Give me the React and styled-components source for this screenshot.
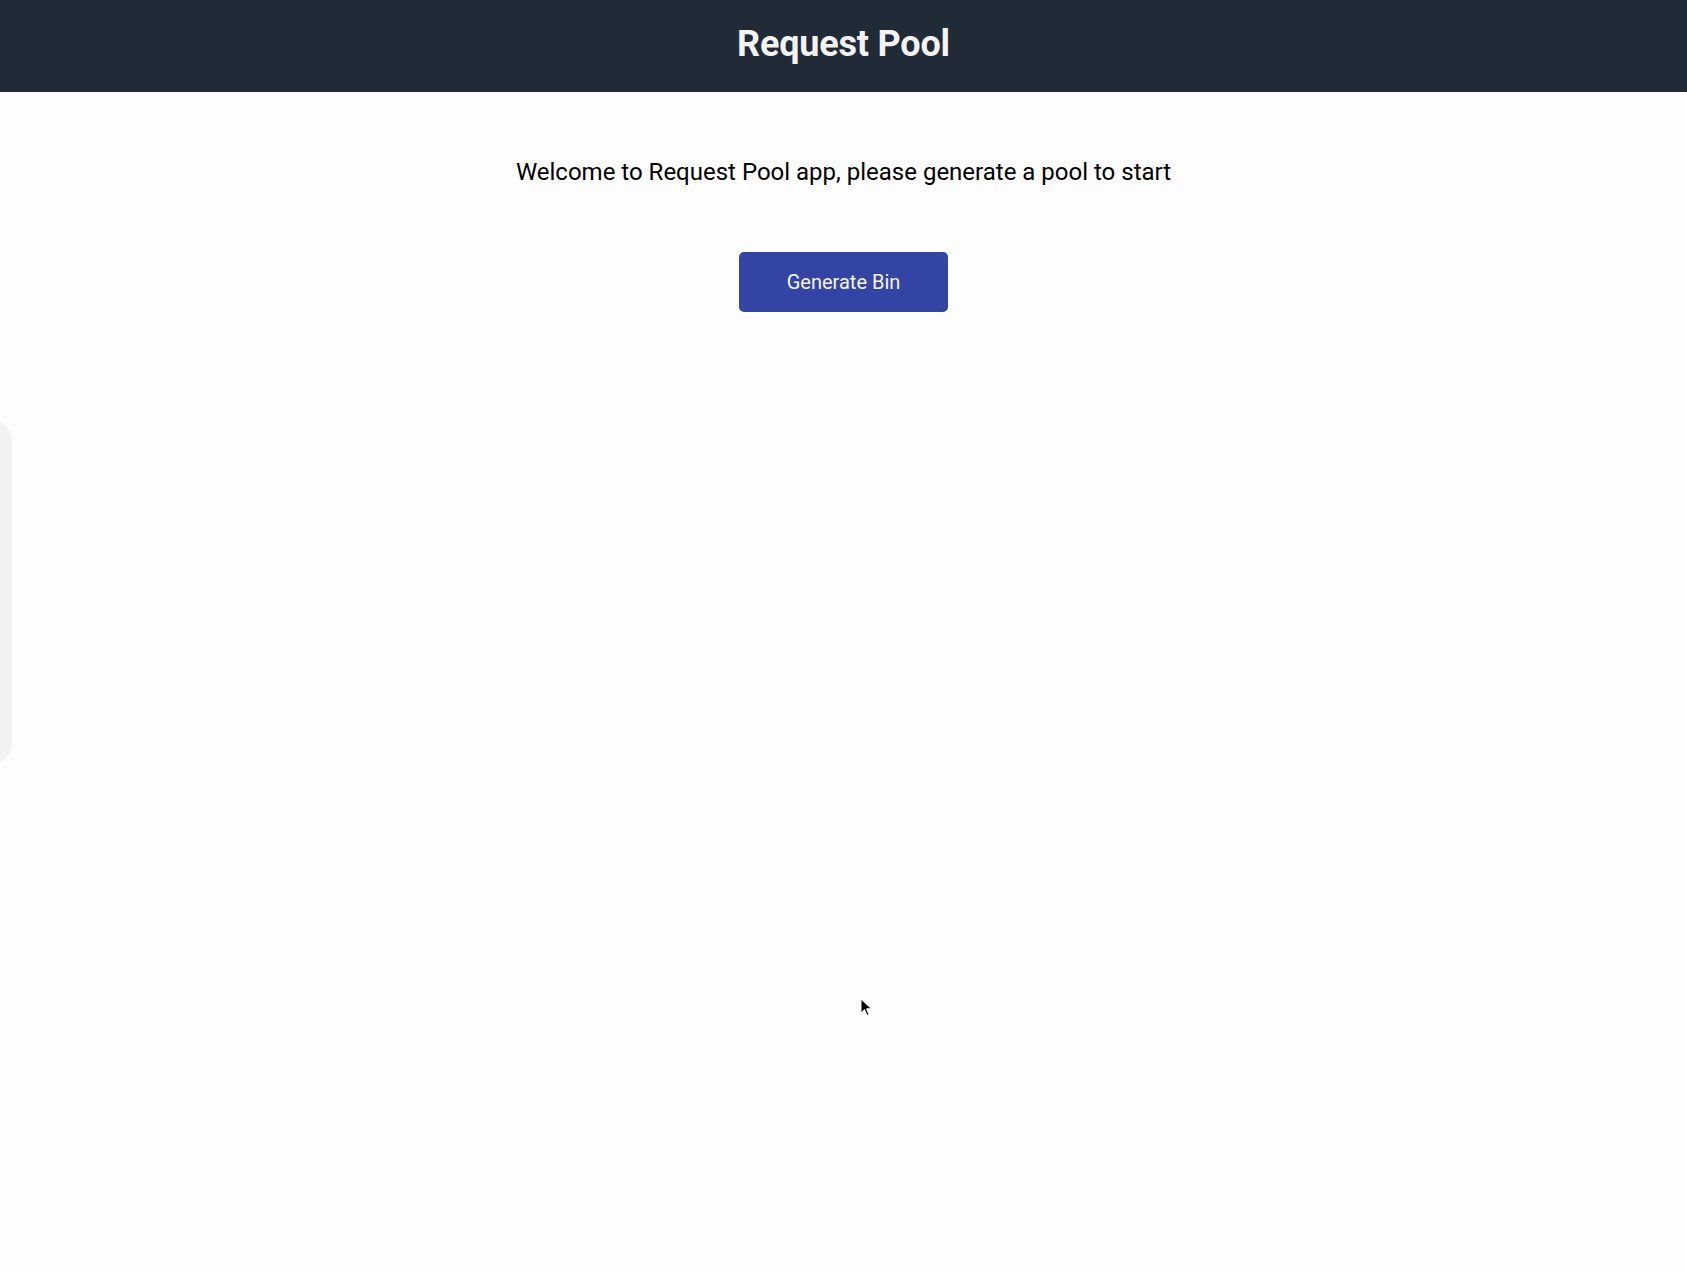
import React from 'react';
import styled, { createGlobalStyle } from 'styled-components';

const GlobalStyle = createGlobalStyle`
    html, body {
        margin: 0;
        padding: 0;
        background: #fdfdfd;
        font-family: Roboto, "Liberation Sans", Arial, sans-serif;
    }
    #root {
        min-height: 100vh;
    }
`;

const Page = styled.div`
    position: relative;
    min-height: 100vh;
    overflow: hidden;
`;

const Header = styled.header`
    height: 92px;
    background-color: #212a37;
    display: flex;
    align-items: center;
    justify-content: center;
`;

const Title = styled.h1`
    margin: 0;
    padding-bottom: 4px;
    color: #f3f3f4;
    font-size: 36px;
    font-weight: 700;
    letter-spacing: -0.2px;
`;

const Main = styled.main`
    display: flex;
    flex-direction: column;
    align-items: center;
    padding-top: 65px;
`;

const Welcome = styled.p`
    margin: 0;
    color: #000;
    font-size: 24px;
    line-height: 30px;
`;

const Button = styled.button`
    margin-top: 65px;
    width: 209px;
    height: 60px;
    border: none;
    border-radius: 5px;
    background-color: #3444a4;
    color: #f4f4f8;
    font-family: inherit;
    font-size: 20px;
    font-weight: 400;
    cursor: pointer;
`;

// half hidden side drawer peeking in from the left edge
const SideTab = styled.div`
    position: absolute;
    left: -30px;
    top: 420px;
    width: 42px;
    height: 344px;
    border-radius: 22px;
    background-color: #f2f2f2;
`;

const Pointer = styled.svg`
    position: absolute;
    left: 860px;
    top: 998px;
`;

const App = () => (
    <Page>
        <GlobalStyle />
        <Header>
            <Title>Request Pool</Title>
        </Header>
        <Main>
            <Welcome>Welcome to Request Pool app, please generate a pool to start</Welcome>
            <Button>Generate Bin</Button>
        </Main>
        <SideTab />
        <Pointer width="14" height="20" viewBox="0 0 14 20">
            <path d="M1 1 L1 15 L4.5 11.5 L7 17.5 L9 16.6 L6.6 10.8 L11.5 10.8 Z" fill="#000" stroke="#fff" strokeWidth="1" />
        </Pointer>
    </Page>
);

export default App;
